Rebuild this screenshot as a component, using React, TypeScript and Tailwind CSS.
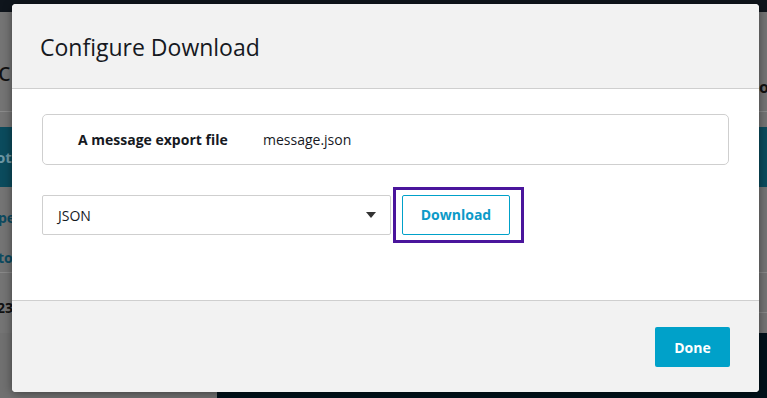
function BackgroundPage() {
  return (
    <div className="flex h-full w-full flex-col bg-[#747474]">
      <div className="h-[12px] bg-[#0f151c]" />
      <div className="flex h-[100px] items-center justify-between border-b border-[#8a8a8a] pt-[20px]">
        <span className="-ml-[2px] text-[26px] font-medium text-[#111]">cl</span>
        <span className="mr-[-2px] mt-[30px] text-[16px] font-bold text-[#111]">o</span>
      </div>
      <div className="mt-[15px] flex h-[60px] items-center bg-[#0b4b5d]">
        <span className="-ml-[4px] text-[15px] font-bold text-[#6f98a5]">oti</span>
      </div>
      <div className="flex h-[86px] flex-col gap-[20px] border-b border-[#888] pt-[21px]">
        <span className="-ml-[2px] text-[14px] font-bold leading-[20px] text-[#0c4a60]">pe</span>
        <span className="-ml-[2px] text-[14px] font-bold leading-[20px] text-[#0c4a60]">to</span>
      </div>
      <div className="flex h-[40px] items-center border-b border-[#888] pt-[30px]">
        <span className="-ml-[3px] text-[14px] font-bold leading-[16px] text-[#111]">23</span>
      </div>
      <div className="h-[20px]" />
      <div className="flex flex-1">
        <div className="w-[217px] bg-[#707070]" />
        <div className="flex-1 bg-[#00111a]" />
      </div>
    </div>
  );
}

export default function App() {
  return (
    <div
      className="relative h-[398px] w-[767px] overflow-hidden"
      style={{ fontFamily: '"Open Sans", "Noto Sans", sans-serif' }}
    >
      <BackgroundPage />

      {/* modal */}
      <div className="absolute left-[12px] top-[4px] flex h-[388px] w-[747px] flex-col overflow-hidden rounded-[4px] bg-white shadow-[0_1px_10px_rgba(0,0,0,0.45)]">
        <div className="flex h-[85px] items-center border-b border-[#cfcfcf] bg-[#f2f2f2] px-[28px] pt-[2px]">
          <h2 className="text-[23px] font-medium leading-none text-[#16191f]">Configure Download</h2>
        </div>

        <div className="flex h-[211px] flex-col px-[30px] pt-[25px]">
          <div className="flex h-[51px] items-center rounded-[5px] border border-[#cfcfcf] px-[35px] text-[14px] text-[#16191f]">
            <span className="w-[185px] font-bold">A message export file</span>
            <span>message.json</span>
          </div>

          <div className="mt-[22px] flex items-center">
            <div className="flex h-[40px] w-[349px] items-center justify-between rounded-[2px] border border-[#cfcfcf] pl-[15px] pr-[12px] text-[14px] text-[#16191f]">
              <span>JSON</span>
              <svg width="10" height="6" viewBox="0 0 10 6" className="mr-[2px]">
                <path d="M0 0h10L5 6z" fill="#333" />
              </svg>
            </div>
            <div className="ml-[2px] border-[3px] border-[#4a159c] py-[5px] pl-[6px] pr-[11px]">
              <button className="flex h-[40px] w-[108px] items-center justify-center rounded-[2px] border border-[#00a1c9] bg-white pb-[2px] text-[14px] font-bold text-[#0c9ac8]">
                Download
              </button>
            </div>
          </div>
        </div>

        <div className="flex flex-1 items-center justify-end border-t border-[#cfcfcf] bg-[#f2f2f2] px-[29px] pt-[1px]">
          <button className="flex h-[40px] w-[75px] items-center justify-center rounded-[2px] bg-[#00a1c9] text-[14px] font-bold text-white">
            Done
          </button>
        </div>
      </div>
    </div>
  );
}
